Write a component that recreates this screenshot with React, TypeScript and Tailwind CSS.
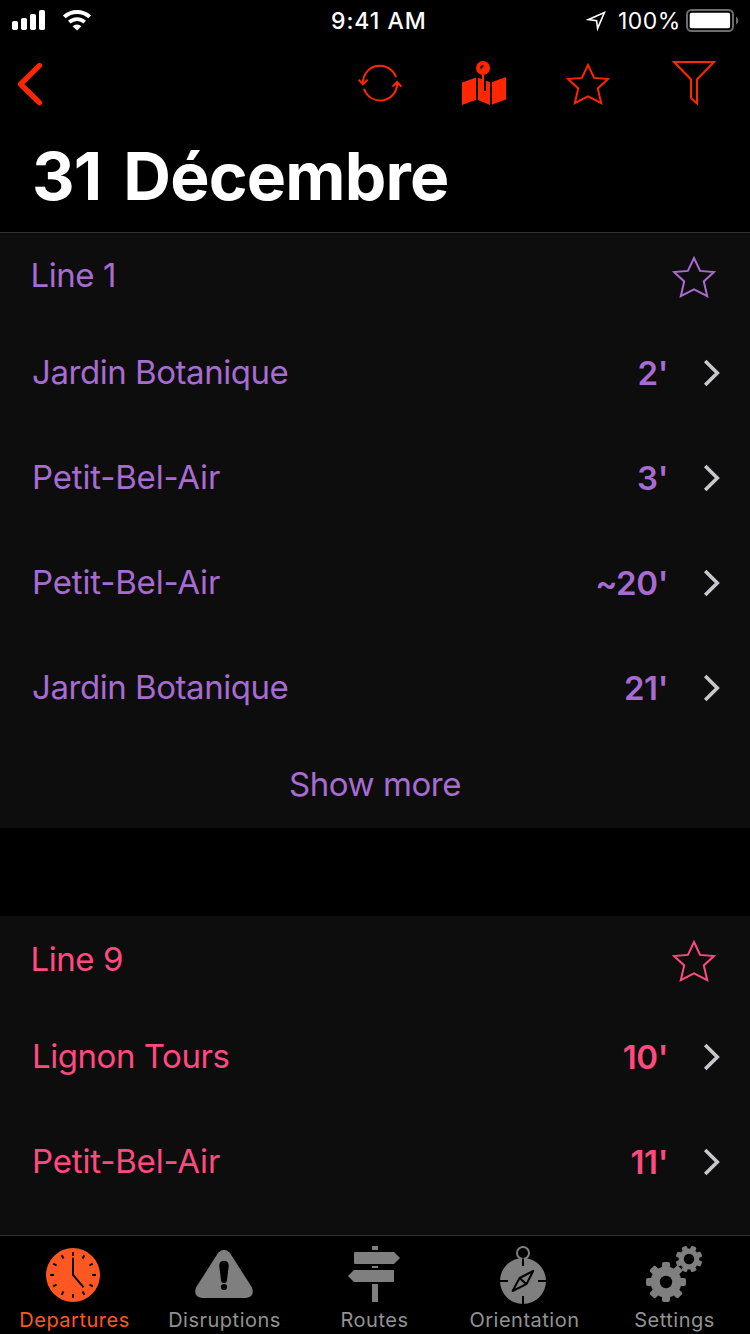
import type { ReactNode } from "react";

const STAR =
  "M22 3 28.1 15.9 42 17 31.8 26.4 35.2 41.2 22 34.4 8.8 41.2 12.2 26.4 2 17 15.9 15.9Z";

function Star() {
  return (
    <svg className="h-11 w-11 shrink-0" viewBox="0 0 44 44" fill="none" stroke="currentColor" strokeWidth="2">
      <path d={STAR} />
    </svg>
  );
}

function StatusBar() {
  return (
    <div className="flex h-10 items-center justify-between text-white">
      <svg className="h-10 w-[331px]" viewBox="0 0 331 40" fill="currentColor">
        <rect x="12" y="21" width="6" height="9" rx="1.8" />
        <rect x="21" y="18" width="6" height="12" rx="1.8" />
        <rect x="30" y="14" width="6" height="16" rx="1.8" />
        <rect x="39" y="10" width="6" height="20" rx="1.8" />
        <path d="M64.3 16.9a18.6 18.6 0 0 1 25.4 0" fill="none" stroke="currentColor" strokeWidth="4" />
        <path d="M69.3 22.2a11.3 11.3 0 0 1 15.4 0" fill="none" stroke="currentColor" strokeWidth="3.8" />
        <path d="M72.6 26.2a6.4 6.4 0 0 1 8.8 0L77 30.4Z" />
      </svg>
      <span className="w-[96px] pt-[2px] text-[23px] font-medium leading-[40px] tracking-[0.95px] whitespace-nowrap">9:41 AM</span>
      <div className="flex w-[323px] items-center justify-end">
        <svg className="h-10 w-8" viewBox="580 0 32 40" fill="none" stroke="currentColor" strokeWidth="1.6">
          <path d="M588.5 19.6 604.4 12.6 597.6 28.4 596.6 20.6Z" />
        </svg>
        <span className="w-[68px] pl-[6px] pt-[2px] text-[23px] leading-[40px] tracking-[0.5px] whitespace-nowrap">100%</span>
        <svg className="h-10 w-[70px]" viewBox="680 0 70 40">
          <rect x="687" y="10" width="46" height="21" rx="4.5" fill="none" stroke="#6e6e6e" strokeWidth="2" />
          <rect x="689.7" y="12.8" width="40.4" height="15.4" rx="2" fill="#fff" />
          <path d="M736 16.4a4.6 4.6 0 0 1 0 8Z" fill="#6e6e6e" />
        </svg>
      </div>
    </div>
  );
}

function NavBar() {
  return (
    <div className="flex h-[46px] items-start pl-4 pr-[34px] text-[#ff2600]">
      <svg className="mr-auto h-[46px] w-7" viewBox="16 61 28 46" fill="none" stroke="currentColor" strokeWidth="5.4" strokeLinecap="round" strokeLinejoin="round">
        <path d="M39.4 65.6 20.6 84.2 39.4 102.6" />
      </svg>
      <svg className="mr-[60px] h-[46px] w-11" viewBox="358 61 44 46" fill="none" stroke="currentColor" strokeWidth="2">
        <path d="M396 77.2A17 17 0 0 0 363 84.4M358.6 79.6 363 84.4 367.6 79.6" />
        <path d="M364 88.8A17 17 0 0 0 397.1 82M392.6 86.6 397.1 82 401.4 86.6" />
      </svg>
      <svg className="mr-[60px] h-[46px] w-11" viewBox="462 61 44 46" fill="currentColor">
        <path d="M462 82.6 476 77.6V99.8L462 105Z" />
        <path d="M478 77.8 490 82.2V105L478 100Z" />
        <path d="M492 82 506 77V99.4L492 104.6Z" />
        <path d="M484 76H486V91H484Z" fill="#000" />
        <path d="M482 74H484V91H482Z" />
        <circle cx="483" cy="68" r="7" />
        <path d="M481 68.6Q481 66.2 483.4 66" fill="none" stroke="#000" strokeWidth="2" />
      </svg>
      <div className="mr-[62px] pt-px">
        <Star />
      </div>
      <svg className="h-[46px] w-11" viewBox="672 61 44 46" fill="none" stroke="currentColor" strokeWidth="2">
        <path d="M674 62H714L697 79.5V103.5L691 98V79.5Z" />
      </svg>
    </div>
  );
}

function SectionHeader({ title }: { title: string }) {
  return (
    <div className="flex h-[88px] items-start justify-between pl-[30.5px] pr-[34px]">
      <span className="pt-[23px] text-[33px] leading-[40px] tracking-[-0.45px]">{title}</span>
      <div className="pt-[23px]">
        <Star />
      </div>
    </div>
  );
}

function Departure({ to, time }: { to: string; time: string }) {
  const tracking = to.includes("-") ? "tracking-[-0.18px]" : "tracking-[-0.45px]";
  return (
    <div className="flex h-[105px] items-center pl-8 pr-7">
      <span className={`flex-1 pb-[2px] text-[33px] leading-[40px] ${tracking}`}>{to}</span>
      <span className="mr-[34px] text-[33px] font-semibold leading-[40px] tracking-[-0.4px]">{time}</span>
      <svg className="h-7 w-5" viewBox="0 0 20 28" fill="none" stroke="#c7c7cc" strokeWidth="3.6">
        <path d="M3.2 1.9 15.3 14 3.2 26.1" />
      </svg>
    </div>
  );
}

function ClockIcon() {
  return (
    <>
      <circle cx="28" cy="30" r="27" />
      <g stroke="#000" strokeWidth="2" fill="none">
        {[0, 30, 60, 90, 120, 150, 180, 210, 240, 270, 300, 330].map((a) => (
          <path key={a} d="M28 7.2V11" transform={`rotate(${a} 28 30)`} />
        ))}
        <path d="M28 12.8V30L38.6 42.4" />
      </g>
    </>
  );
}

function WarningIcon() {
  return (
    <>
      <path d="M23.2 7.8Q29 1.6 34.8 7.8L57 42.5Q60 52.4 51 53H7Q-2 52.4 1 42.5Z" />
      <path d="M24.2 20.5a4.8 4.8 0 0 1 9.6 0L32 35a3 3 0 0 1-6 0Z" fill="#000" />
      <circle cx="29" cy="42" r="3.1" fill="#000" />
    </>
  );
}

function SignIcon() {
  return (
    <>
      <path d="M27 1H33V5H27ZM27 21H33V23H27ZM27 39H33V57H27Z" />
      <path d="M10 7H49L55 13 49 19H10Q9 19 9 18V8Q9 7 10 7Z" />
      <path d="M48 25H9L3 31 9 37H48Q49 37 49 36V26Q49 25 48 25Z" />
    </>
  );
}

function CompassIcon() {
  return (
    <>
      <circle cx="28" cy="36" r="23" />
      <circle cx="28" cy="8" r="6" fill="#000" stroke="currentColor" strokeWidth="2" />
      <g stroke="#000" strokeWidth="2" fill="none">
        <path d="M28 13.5V21M28 51V60M4 36H13M43 36H52" />
        <path d="M38.2 26 24.6 33 17.6 46 31.4 39.2ZM24.6 33 31.4 39.2" strokeLinejoin="round" />
      </g>
    </>
  );
}

function Gear({ x, y, r, body, hole, tooth, turn }: { x: number; y: number; r: number; body: number; hole: number; tooth: number; turn: number }) {
  return (
    <g>
      {[0, 45, 90, 135].map((a) => (
        <rect key={a} x={x - tooth / 2} y={y - r} width={tooth} height={r * 2} rx={tooth / 4} transform={`rotate(${a + turn} ${x} ${y})`} />
      ))}
      <circle cx={x} cy={y} r={body} />
      <circle cx={x} cy={y} r={hole} fill="#000" />
    </g>
  );
}

function GearsIcon() {
  return (
    <>
      <Gear x={21} y={37} r={20} body={15.4} hole={6.2} tooth={8} turn={0} />
      <Gear x={44} y={14} r={13.4} body={10.4} hole={5.2} tooth={5.6} turn={22.5} />
    </>
  );
}

function Tab({ label, active, children }: { label: string; active?: boolean; children: ReactNode }) {
  return (
    <div className={`flex w-[150px] flex-col items-center pt-[9px] ${active ? "text-[#ff5722]" : "text-[#7f7f7f]"}`}>
      <svg className="h-[60px] w-[60px]" viewBox="0 0 60 60" fill="currentColor">
        {children}
      </svg>
      <span className={`mt-[3px] -ml-px text-[20px] leading-[24px] tracking-[0.5px] ${active ? "" : "text-[#929292]"}`}>{label}</span>
    </div>
  );
}

export default function App() {
  return (
    <div className="flex h-[1334px] w-[750px] flex-col overflow-hidden bg-black font-['Inter',sans-serif]">
      <header className="h-[232px] shrink-0">
        <StatusBar />
        <div className="pt-[21px]">
          <NavBar />
        </div>
        <h1 className="pl-[32px] pt-[29px] text-[66px] font-bold leading-[80px] tracking-[-0.8px] text-white [word-spacing:7px]">31 Décembre</h1>
      </header>
      <main className="flex h-[1003px] shrink-0 flex-col gap-[88px] overflow-hidden">
        <section className="shrink-0 bg-[#0d0d0d] text-[#a86bd1] shadow-[inset_0_1px_0_#333]">
          <SectionHeader title="Line 1" />
          <Departure to="Jardin Botanique" time="2'" />
          <Departure to="Petit-Bel-Air" time="3'" />
          <Departure to="Petit-Bel-Air" time="~20'" />
          <Departure to="Jardin Botanique" time="21'" />
          <div className="h-[88px] pt-[24px] text-center text-[33px] leading-[40px] tracking-[-0.45px]">Show more</div>
        </section>
        <section className="h-[319px] shrink-0 bg-[#0d0d0d] text-[#ff4a80]">
          <SectionHeader title="Line 9" />
          <Departure to="Lignon Tours" time="10'" />
          <Departure to="Petit-Bel-Air" time="11'" />
        </section>
      </main>
      <nav className="flex h-[99px] shrink-0 border-t border-[#333] bg-black">
        <Tab label="Departures" active>
          <ClockIcon />
        </Tab>
        <Tab label="Disruptions">
          <WarningIcon />
        </Tab>
        <Tab label="Routes">
          <SignIcon />
        </Tab>
        <Tab label="Orientation">
          <CompassIcon />
        </Tab>
        <Tab label="Settings">
          <GearsIcon />
        </Tab>
      </nav>
    </div>
  );
}
